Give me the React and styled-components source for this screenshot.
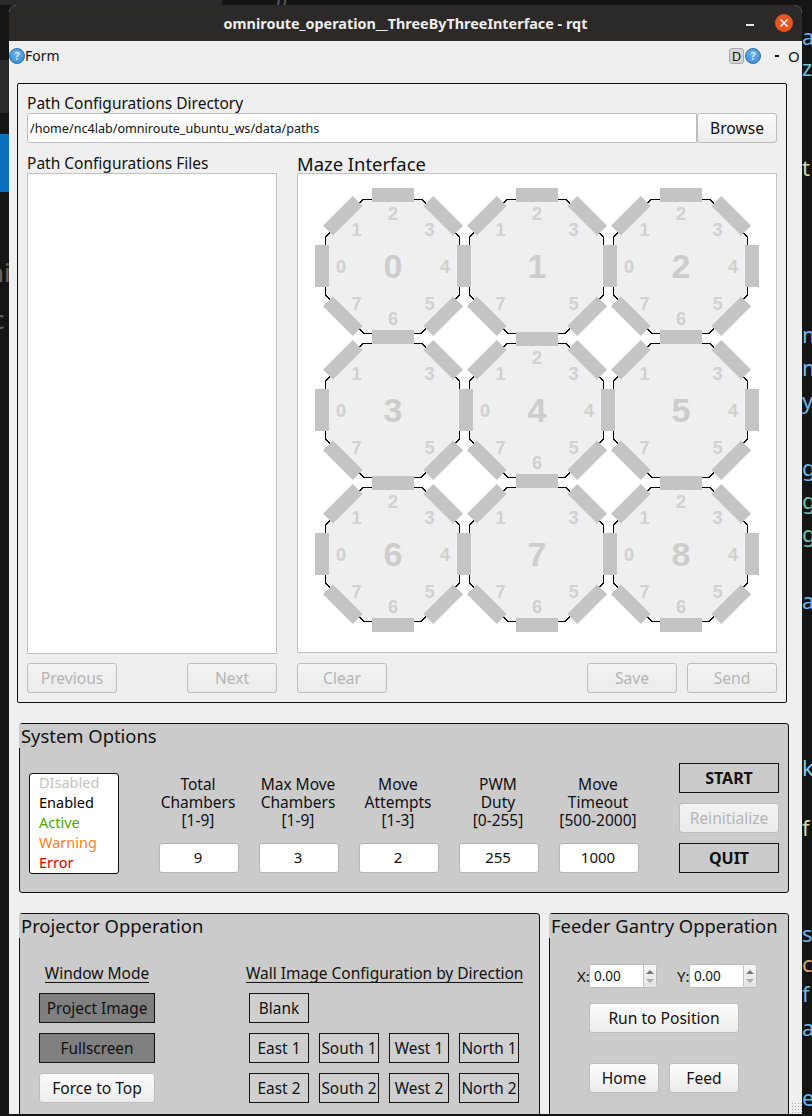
import React from "react";
import styled, { createGlobalStyle } from "styled-components";

const UI_FONT = `"Noto Sans", "Open Sans", sans-serif`;

const GlobalStyle = createGlobalStyle`
  html, body { margin: 0; padding: 0; background: #151515; }
  * { box-sizing: border-box; }
  body { font-family: ${UI_FONT}; color: #111; }
`;

/* ---------- desktop + window ---------- */
const Desktop = styled.div`
  position: relative;
  width: 812px;
  height: 1116px;
  overflow: hidden;
  background: #151515;
  padding: 5px 10px 2px 9px;
`;

const BackStrip = styled.div`
  position: absolute;
  left: 0;
  width: ${p => p.$width || 9}px;
  top: ${p => p.$top}px;
  height: ${p => p.$height}px;
  background: ${p => p.$color};
`;

const Peek = styled.span`
  position: absolute;
  top: ${p => p.$top}px;
  left: ${p => p.$left}px;
  font-size: ${p => p.$size || 22}px;
  line-height: 24px;
  color: ${p => p.$color};
`;

const Window = styled.div`
  position: relative;
  width: 793px;
  height: 1109px;
  overflow: hidden;
  background: #efefef;
  border-radius: 8px 8px 0 0;
`;

const TitleBar = styled.div`
  position: relative;
  height: 36px;
  background: #2c2a29;
  display: flex;
  align-items: center;
  justify-content: center;
  color: #eeeeec;
  font-size: 14.4px;
  font-weight: 700;
`;

const Minimize = styled.span`
  position: absolute;
  left: 737px;
  top: 19px;
  width: 8px;
  height: 2px;
  background: #e8e8e8;
`;

const CloseDot = styled.span`
  position: absolute;
  left: 766px;
  top: 9px;
  width: 18px;
  height: 18px;
  border-radius: 50%;
  background: #e95420;
  display: flex;
  align-items: center;
  justify-content: center;
`;

const MenuRow = styled.div`
  height: 29px;
  display: flex;
  align-items: center;
  justify-content: space-between;
  font-size: 14px;
`;

const MenuSide = styled.div`
  display: flex;
  align-items: center;
`;

const Help = styled.span`
  width: 16px;
  height: 16px;
  border-radius: 50%;
  border: 1px solid #2a6fa8;
  background: radial-gradient(circle at 50% 35%, #6db5ee, #2f86d2);
  color: #d8ecfb;
  font-size: 11px;
  font-weight: 700;
  line-height: 14px;
  text-align: center;
`;

const DockButton = styled.span`
  width: 15px;
  height: 16px;
  margin-right: 1px;
  border: 1px solid #a9a9a9;
  border-radius: 3px;
  background: #d6d6d6;
  font-size: 13px;
  line-height: 14px;
  text-align: center;
`;

const Dash = styled.span`
  width: 4px;
  height: 2px;
  background: #111;
  margin-left: 14px;
`;

const CloseO = styled.span`
  margin: 0 2px 0 9px;
  font-size: 15px;
  width: 12px;
`;

const Content = styled.div`
  padding-left: 8px;
`;

/* ---------- path panel ---------- */
const PathPanel = styled.section`
  width: 770px;
  height: 620px;
  margin-top: 13px;
  padding: 9px;
  border: 1px solid #111;
  border-radius: 2px;
`;

const Label = styled.div`
  height: 20px;
  line-height: 20px;
  font-size: 15.5px;
`;

const DirRow = styled.div`
  display: flex;
  height: 30px;
`;

const DirInput = styled.input`
  flex: 1;
  min-width: 0;
  height: 30px;
  padding: 0 2px;
  border: 1px solid #bcbcbc;
  border-radius: 3px 0 0 3px;
  background: #fff;
  font-family: ${UI_FONT};
  font-size: 12.6px;
  color: #111;
  outline: none;
`;

const Columns = styled.div`
  display: grid;
  grid-template-columns: 250px 480px;
  column-gap: 20px;
`;

const ColumnLabel = styled.div`
  height: 30px;
  padding-top: 10px;
  line-height: ${p => p.$line || 20}px;
  font-size: ${p => p.$size || 15.5}px;
`;

const FileList = styled.div`
  height: 481px;
  margin-bottom: 9px;
  background: #fff;
  border: 1px solid #c2c2c2;
`;

const MazeBox = styled.div`
  height: 480px;
  margin-bottom: 10px;
  background: #fff;
  border: 1px solid #c2c2c2;
`;

const MazeSvg = styled.svg`
  display: block;
  font-family: "Liberation Sans", Arial, sans-serif;
  font-weight: 700;
`;

const Footer = styled.div`
  display: flex;
  justify-content: space-between;
  gap: 10px;
`;

const Spacer = styled.div`
  flex: 1;
`;

const Button = styled.button`
  width: ${p => p.$width || 90}px;
  height: 30px;
  padding: 0 0 1px;
  flex: none;
  border: 1px solid #bdbdbd;
  border-radius: 3px;
  background: ${p => (p.disabled
    ? "linear-gradient(#f3f3f3, #ebebeb)"
    : "linear-gradient(#fbfbfb, #ececec)")};
  color: ${p => (p.disabled ? "#b4b4b4" : "#111")};
  font-family: ${UI_FONT};
  font-size: 15.6px;
`;

/* ---------- grey group boxes ---------- */
const GroupBox = styled.section`
  height: ${p => p.$height}px;
  width: ${p => p.$width}px;
  flex: none;
  background: #cbcbcb;
  border: 1px solid #111;
  border-radius: 3px;
`;

const GroupTitle = styled.div`
  display: inline-block;
  height: 24px;
  margin-left: -1px;
  padding-left: 2px;
  padding-right: 4px;
  line-height: 24px;
  font-size: 18.4px;
  background: #cbcbcb;
  vertical-align: top;
`;

const SystemWrap = styled.div`
  margin: 20px 0 0 2px;
`;

const SystemBody = styled.div`
  display: flex;
  align-items: flex-start;
  padding: 15px 0 0 9px;
`;

const Legend = styled.div`
  width: 90px;
  height: 101px;
  margin: 10px 20px 0 0;
  padding: 0 0 0 9px;
  background: #fff;
  border: 1px solid #111;
  border-radius: 3px;
  font-size: 14.5px;
  line-height: 16px;
`;

const LegendLine = styled.div`
  height: 20px;
  color: ${p => p.$color};
`;

const Field = styled.div`
  width: 80px;
  margin-left: 20px;
  padding-top: 12px;
  display: flex;
  flex-direction: column;
  align-items: center;
`;

const FieldHead = styled.div`
  height: 54px;
  padding-right: 2px;
  white-space: nowrap;
  font-size: 15.5px;
  line-height: 18px;
  text-align: center;
`;

const FieldInput = styled.input`
  width: 80px;
  height: 30px;
  margin-top: 14px;
  padding: 0 2px 2px 0;
  border: 1px solid #b5b5b5;
  border-radius: 3px;
  background: #fff;
  font-family: ${UI_FONT};
  font-size: 15px;
  color: #111;
  text-align: center;
  outline: none;
`;

const Actions = styled.div`
  width: 100px;
  margin-left: 40px;
  display: flex;
  flex-direction: column;
  gap: 10px;
`;

const BoldButton = styled.button`
  width: 100px;
  height: 30px;
  padding: 0 0 1px;
  border: 1px solid #111;
  background: #cbcbcb;
  color: #111;
  font-family: ${UI_FONT};
  font-size: 16px;
  font-weight: 700;
`;

const BottomRow = styled.div`
  display: flex;
  gap: 9px;
  margin: 20px 0 0 2px;
`;

const ProjectorBody = styled.div`
  display: flex;
  padding: 25px 0 0 19px;
`;

const ProjectorColumn = styled.div`
  width: ${p => p.$width}px;
  margin-left: ${p => p.$left || 0}px;
  display: flex;
  flex-direction: column;
  gap: 10px;
`;

const Heading = styled.div`
  align-self: ${p => p.$align || "center"};
  height: 20px;
  margin-left: ${p => p.$left || 0}px;
  border-bottom: 1px solid #111;
  line-height: 21px;
  font-size: 15.5px;
  white-space: nowrap;
`;

const ToggleButton = styled.button`
  width: ${p => p.$width || 60}px;
  height: 30px;
  padding: 0;
  flex: none;
  border: 1px solid #111;
  background: ${p => (p.$on ? "#7f7f7f" : "#cfcfcf")};
  color: #111;
  font-family: ${UI_FONT};
  font-size: 15.4px;
  white-space: nowrap;
`;

const ButtonRow = styled.div`
  display: flex;
  gap: 10px;
`;

const SpinRow = styled.div`
  display: flex;
  align-items: center;
  gap: 20px;
  padding: 26px 0 0 27px;
`;

const SpinPair = styled.label`
  display: flex;
  align-items: center;
  font-size: 15px;
`;

const SpinLabel = styled.span`
  width: 12px;
  white-space: nowrap;
`;

const SpinBox = styled.div`
  width: 68px;
  height: 24px;
  display: flex;
  border: 1px solid #bdbdbd;
  border-radius: 3px;
  background: #fff;
  overflow: hidden;
`;

const SpinInput = styled.input`
  width: 53px;
  height: 22px;
  padding: 0 0 0 4px;
  border: 0;
  font-family: ${UI_FONT};
  font-size: 13.5px;
  color: #111;
  outline: none;
`;

const SpinArrows = styled.div`
  width: 14px;
  border-left: 1px solid #c4c4c4;
  background: linear-gradient(#f6f6f6, #e4e4e4);
  display: flex;
  flex-direction: column;
  align-items: center;
  justify-content: center;
  gap: 5px;
`;

const Arrow = styled.span`
  width: 0;
  height: 0;
  border-left: 4px solid transparent;
  border-right: 4px solid transparent;
  border-bottom: ${p => (p.$up ? "4px solid #777" : "0")};
  border-top: ${p => (p.$up ? "0" : "4px solid #aaa")};
`;

const FeederActions = styled.div`
  width: 150px;
  margin: ${p => p.$top}px 0 0 39px;
  display: flex;
  gap: 10px;
`;

const Grip = styled.span`
  position: absolute;
  right: 0;
  bottom: 1px;
  width: 11px;
  height: 11px;
  background-image: radial-gradient(#a8a8a8 40%, transparent 45%);
  background-size: 3px 3px;
`;

/* ---------- maze data ---------- */
const RADIUS = 71;
const ORIGIN = { x: 95, y: 92 }; // centre of chamber 0 inside the maze box
const PITCH = 144;

// digit offsets from the chamber centre, indexed by wall number
const DIGIT_AT = [
  [-52, 0], [-36.5, -37], [0, -52.5], [36.5, -37],
  [52, 0], [36.5, 37], [0, 52], [-36.5, 37],
];

const CHAMBER_WALLS = [
  [0, 1, 2, 3, 4, 5, 6, 7],
  [1, 2, 3, 5, 7],
  [0, 1, 2, 3, 4, 5, 6, 7],
  [0, 1, 3, 5, 7],
  [0, 1, 2, 3, 4, 5, 6, 7],
  [1, 3, 4, 5, 7],
  [0, 1, 2, 3, 4, 5, 6, 7],
  [1, 3, 5, 6, 7],
  [0, 1, 2, 3, 4, 5, 6, 7],
];

const OCTAGON = "-29.5,-67 28.5,-67 66.5,-29 66.5,29 28.5,67 -29.5,67 -67.5,29 -67.5,-29";

function Chamber({ index, walls }) {
  const cx = ORIGIN.x + (index % 3) * PITCH;
  const cy = ORIGIN.y + Math.floor(index / 3) * PITCH;
  return (
    <g transform={`translate(${cx} ${cy})`}>
      <polygon points={OCTAGON} fill="#efefef" stroke="#000" strokeWidth="1" shapeRendering="crispEdges" />
      {walls.map(w => (
        <text
          key={w}
          x={DIGIT_AT[w][0]}
          y={DIGIT_AT[w][1] + 6.5}
          fontSize="18"
          textAnchor="middle"
          fill="#d0d0d0"
        >
          {w}
        </text>
      ))}
      <text y="12" fontSize="34" textAnchor="middle" fill="#cdcdcd">{index}</text>
    </g>
  );
}

function ChamberWalls({ index, walls }) {
  const cx = ORIGIN.x + (index % 3) * PITCH;
  const cy = ORIGIN.y + Math.floor(index / 3) * PITCH;
  return (
    <g transform={`translate(${cx} ${cy})`}>
      {walls.map(w => (
        <rect
          key={w}
          x={-RADIUS - 7}
          y={-21}
          width="14"
          height="42"
          fill="#c4c4c4"
          transform={`rotate(${w * 45})`}
        />
      ))}
    </g>
  );
}

const FIELDS = [
  { head: ["Total", "Chambers", "[1-9]"], value: "9" },
  { head: ["Max Move", "Chambers", "[1-9]"], value: "3" },
  { head: ["Move", "Attempts", "[1-3]"], value: "2" },
  { head: ["PWM", "Duty", "[0-255]"], value: "255" },
  { head: ["Move", "Timeout", "[500-2000]"], value: "1000" },
];

const LEGEND = [
  { text: "DIsabled", color: "#c4c4c4" },
  { text: "Enabled", color: "#000" },
  { text: "Active", color: "#4ea600" },
  { text: "Warning", color: "#ff7f1e" },
  { text: "Error", color: "#e00000" },
];

const PEEKS = [
  ["a", 24, "#6fb7e6"], ["z", 55, "#6fc3d6"], ["t", 155, "#cfd8b0"],
  ["m", 322, "#6fb7e6"], ["m", 355, "#6fb7e6"], ["y", 388, "#6fb7e6"],
  ["g", 455, "#6fb7e6"], ["g", 488, "#6fc3a6"], ["g", 521, "#6fc3a6"],
  ["a", 588, "#6fb7e6"], ["k", 755, "#7ec8e8"], ["f", 815, "#cfd8b0"],
  ["s", 921, "#6fb7e6"], ["c", 951, "#d9a066"], ["f", 981, "#6fb7e6"],
  ["a", 1015, "#6fb7e6"], ["e", 1085, "#6fb7e6"],
];

export default function App() {
  return (
    <Desktop>
      <GlobalStyle />
      <BackStrip $top={0} $height={5} $width={222} $color="#2a2a2c" />
      <BackStrip $top={60} $height={53} $color="#2a2a2a" />
      <BackStrip $top={134} $height={58} $color="#0a6fbf" />
      <Peek $left={274} $top={-15} $color="#555">))</Peek>
      <Peek $left={-9} $top={74} $size={26} $color="#666">t</Peek>
      <Peek $left={-12} $top={260} $size={26} $color="#666">ni</Peek>
      <Peek $left={-8} $top={307} $size={26} $color="#666">c</Peek>
      {PEEKS.map(([text, top, color]) => (
        <Peek key={`${text}${top}`} $left={802} $top={top} $color={color}>{text}</Peek>
      ))}

      <Window>
        <TitleBar>
          omniroute_operation__ThreeByThreeInterface - rqt
          <Minimize />
          <CloseDot>
            <svg width="10" height="10" viewBox="0 0 10 10">
              <path d="M1.5 1.5 L8.5 8.5 M8.5 1.5 L1.5 8.5" stroke="#fff" strokeWidth="1.5" />
            </svg>
          </CloseDot>
        </TitleBar>

        <MenuRow>
          <MenuSide>
            <Help>?</Help>
            Form
          </MenuSide>
          <MenuSide>
            <DockButton>D</DockButton>
            <Help>?</Help>
            <Dash />
            <CloseO>O</CloseO>
          </MenuSide>
        </MenuRow>

        <Content>
          <PathPanel>
            <Label>Path Configurations Directory</Label>
            <DirRow>
              <DirInput readOnly value="/home/nc4lab/omniroute_ubuntu_ws/data/paths" />
              <Button $width={80}>Browse</Button>
            </DirRow>
            <Columns>
              <div>
                <ColumnLabel>Path Configurations Files</ColumnLabel>
                <FileList />
                <Footer>
                  <Button disabled>Previous</Button>
                  <Button disabled>Next</Button>
                </Footer>
              </div>
              <div>
                <ColumnLabel $size={18.4} $line={22}>Maze Interface</ColumnLabel>
                <MazeBox>
                  <MazeSvg width="478" height="478" viewBox="0 0 478 478">
                    {CHAMBER_WALLS.map((walls, i) => (
                      <Chamber key={i} index={i} walls={walls} />
                    ))}
                    {CHAMBER_WALLS.map((walls, i) => (
                      <ChamberWalls key={i} index={i} walls={walls} />
                    ))}
                  </MazeSvg>
                </MazeBox>
                <Footer>
                  <Button disabled>Clear</Button>
                  <Spacer />
                  <Button disabled>Save</Button>
                  <Button disabled>Send</Button>
                </Footer>
              </div>
            </Columns>
          </PathPanel>
        </Content>

        <Content>
          <SystemWrap>
            <GroupBox $width={770} $height={170}>
              <GroupTitle>System Options</GroupTitle>
              <SystemBody>
                <Legend>
                  {LEGEND.map(l => (
                    <LegendLine key={l.text} $color={l.color}>{l.text}</LegendLine>
                  ))}
                </Legend>
                {FIELDS.map(f => (
                  <Field key={f.head.join()}>
                    <FieldHead>
                      {f.head.map(line => <div key={line}>{line}</div>)}
                    </FieldHead>
                    <FieldInput readOnly value={f.value} />
                  </Field>
                ))}
                <Actions>
                  <BoldButton>START</BoldButton>
                  <Button disabled $width={100}>Reinitialize</Button>
                  <BoldButton>QUIT</BoldButton>
                </Actions>
              </SystemBody>
            </GroupBox>
          </SystemWrap>

          <BottomRow>
            <GroupBox $width={521} $height={240}>
              <GroupTitle>Projector Opperation</GroupTitle>
              <ProjectorBody>
                <ProjectorColumn $width={116}>
                  <Heading>Window Mode</Heading>
                  <ToggleButton $on $width={116}>Project Image</ToggleButton>
                  <ToggleButton $on $width={116}>Fullscreen</ToggleButton>
                  <Button $width={116}>Force to Top</Button>
                </ProjectorColumn>
                <ProjectorColumn $width={280} $left={94}>
                  <Heading $align="flex-start" $left={-3}>Wall Image Configuration by Direction</Heading>
                  <ToggleButton>Blank</ToggleButton>
                  <ButtonRow>
                    <ToggleButton>East 1</ToggleButton>
                    <ToggleButton>South 1</ToggleButton>
                    <ToggleButton>West 1</ToggleButton>
                    <ToggleButton>North 1</ToggleButton>
                  </ButtonRow>
                  <ButtonRow>
                    <ToggleButton>East 2</ToggleButton>
                    <ToggleButton>South 2</ToggleButton>
                    <ToggleButton>West 2</ToggleButton>
                    <ToggleButton>North 2</ToggleButton>
                  </ButtonRow>
                </ProjectorColumn>
              </ProjectorBody>
            </GroupBox>

            <GroupBox $width={240} $height={240}>
              <GroupTitle>Feeder Gantry Opperation</GroupTitle>
              <SpinRow>
                {["X", "Y"].map(axis => (
                  <SpinPair key={axis}>
                    <SpinLabel>{axis}:</SpinLabel>
                    <SpinBox>
                      <SpinInput readOnly value="0.00" />
                      <SpinArrows>
                        <Arrow $up />
                        <Arrow />
                      </SpinArrows>
                    </SpinBox>
                  </SpinPair>
                ))}
              </SpinRow>
              <FeederActions $top={15}>
                <Button $width={150}>Run to Position</Button>
              </FeederActions>
              <FeederActions $top={30}>
                <Button $width={70}>Home</Button>
                <Button $width={70}>Feed</Button>
              </FeederActions>
            </GroupBox>
          </BottomRow>
        </Content>
        <Grip />
      </Window>
    </Desktop>
  );
}
